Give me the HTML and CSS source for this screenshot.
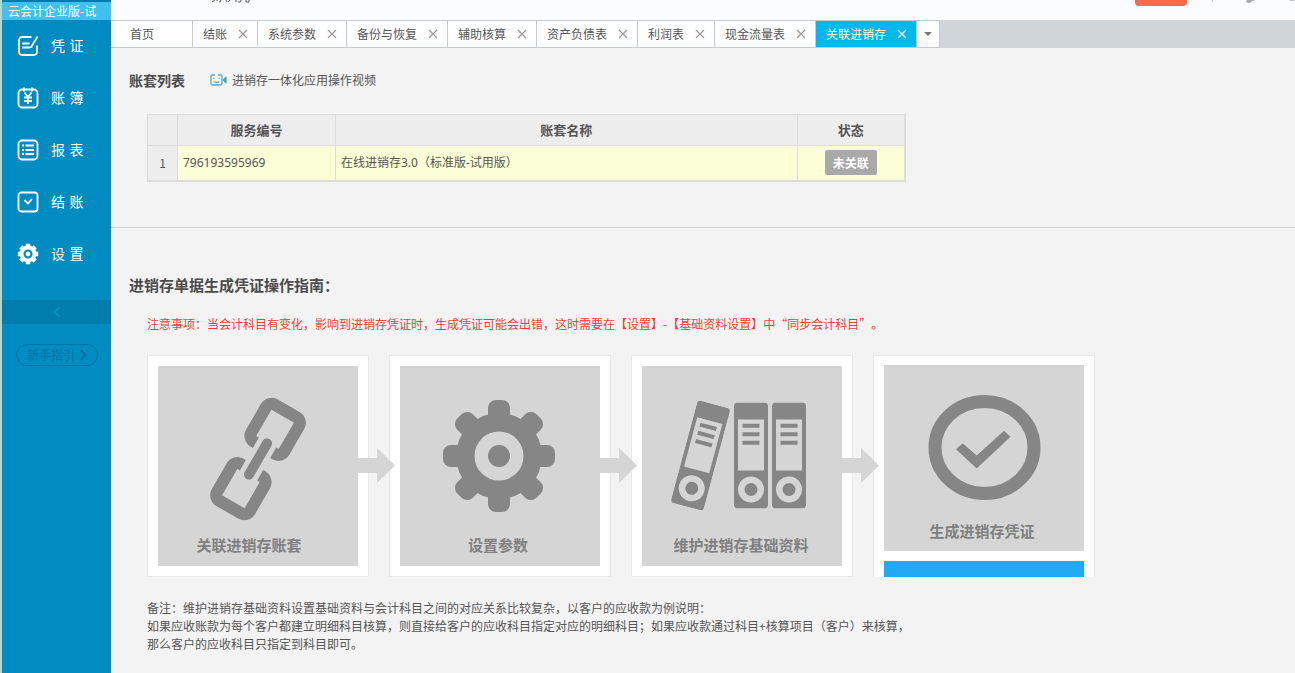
FILE: index.html
```html
<!DOCTYPE html>
<html lang="zh-CN">
<head>
<meta charset="utf-8">
<title>云会计企业版</title>
<link rel="stylesheet" href="styles.css">
</head>
<body>
<svg class="defs" aria-hidden="true">
  <symbol id="close" viewBox="0 0 10 10"><path d="M1 1l8 8M9 1l-8 8" fill="none" stroke="currentColor" stroke-width="1.2"/></symbol>
  <symbol id="arrow" viewBox="0 0 37 36"><path d="M0 10H19V0L37 17.500L19 35V25H0Z" fill="#d5d5d5"/></symbol>
  <symbol id="binder" viewBox="0 0 34 106">
    <rect width="34" height="106" rx="4" fill="#868686"/>
    <path d="M4 17h26v51H4z" fill="#d5d5d5"/>
    <path d="M8.500 23.300h17M8.500 31.700h17M8.500 40.300h17" stroke="#868686" stroke-width="4"/>
    <circle cx="17" cy="87" r="13" fill="#d5d5d5"/><circle cx="17" cy="87" r="6.500" fill="#868686"/>
  </symbol>
</svg>
<div class="app">
  <aside class="sidebar">
    <div class="product">云会计企业版-试</div>
    <nav class="nav">
      <a href="#"><svg viewBox="0 0 22 22"><path d="M14.500 2H5.500Q2 2 2 5.500v11Q2 20 5.500 20h11q3.500 0 3.500-3.500V10.500M20.500 1.500L14 12.500M5 8.500h7.500M5 12.500h7.500l1.500-.5"/></svg>凭 证</a>
      <a href="#"><svg viewBox="0 0 22 22"><rect x="1.500" y="2.500" width="19" height="18" rx="3.500"/><path d="M7 .5V4.500M15 .5V4.500M7.500 5.500l3.500 4.500 3.500-4.500M11 10v7M7 10.500h8M7 14h8"/></svg>账 簿</a>
      <a href="#"><svg viewBox="0 0 22 22"><rect x="1.500" y="1.500" width="19" height="19" rx="3.500"/><path d="M5 6.500h2M8.500 6.500H17M5 11h2M8.500 11H17M5 15h2M8.500 15H17"/></svg>报 表</a>
      <a href="#"><svg viewBox="0 0 22 22"><rect x="1.500" y="1.500" width="19" height="19" rx="3"/><path d="M7.500 9l3.500 3.500L15 8"/></svg>结 账</a>
      <a href="#"><svg viewBox="0 0 22 22"><circle cx="11" cy="11" r="6.500" stroke-width="4"/><path stroke-width="4.500" d="M11 4V.8M11 18v3.200M4 11H.8M18 11h3.200M6 6L3.800 3.800M16 16l2.200 2.200M16 6l2.200-2.200M6 16l-2.200 2.200"/><circle cx="11" cy="11" r="1.500" fill="#fff"/></svg>设 置</a>
    </nav>
    <button class="collapse" type="button" aria-label="收起菜单"><svg viewBox="0 0 8 12"><path d="M6.500 1L1.500 6l5 5"/></svg></button>
    <button class="guide-btn" type="button">新手指引<svg viewBox="0 0 8 12"><path d="M1.500 1l5 5-5 5"/></svg></button>
  </aside>

  <div class="page">
    <header class="topbar">
      <svg class="top-name" viewBox="0 0 40 4"><path d="M1 2l3-2M6 0v1M10 0q0 2-2 2M15 0l1 2M19 0l-2 2M25 0v2M30 0q0 3-3 2M35 0v2h3M38 0v2" fill="none" stroke="#555" stroke-width="1"/></svg>
      <button class="top-action" type="button" aria-label="购买"></button>
      <svg class="top-tools" viewBox="0 0 84 4"><path d="M1.500 0v2" stroke="#ccc"/><path d="M35 1q0 2 2.500 2 2 0 3-1.500L44 0h-8z" fill="#aaa"/><path d="M78 0l6 1" stroke="#bbb"/></svg>
    </header>

    <nav class="tabs">
      <a class="tab home" href="#">首页</a>
      <a class="tab" href="#">结账<svg><use href="#close"/></svg></a>
      <a class="tab" href="#">系统参数<svg><use href="#close"/></svg></a>
      <a class="tab" href="#">备份与恢复<svg><use href="#close"/></svg></a>
      <a class="tab" href="#">辅助核算<svg><use href="#close"/></svg></a>
      <a class="tab" href="#">资产负债表<svg><use href="#close"/></svg></a>
      <a class="tab" href="#">利润表<svg><use href="#close"/></svg></a>
      <a class="tab" href="#">现金流量表<svg><use href="#close"/></svg></a>
      <a class="tab active" href="#">关联进销存<svg><use href="#close"/></svg></a>
      <button class="tab-more" type="button" aria-label="更多标签"><svg viewBox="0 0 8 4"><path d="M0 0h8L4 4z" fill="#777"/></svg></button>
    </nav>

    <main>
      <section class="accounts">
        <div class="section-head">
          <h2>账套列表</h2>
          <a class="video" href="#"><svg viewBox="0 0 17 12"><path d="M5 1H2.500Q1 1 1 2.500v7Q1 11 2.500 11h8Q12 11 12 9.500v-7Q12 1 10.500 1H8M4 4v1M9 4v1M4 7.500q2.500 2 5 0" fill="none" stroke="#53a9cf" stroke-width="1.300"/><path d="M12.500 6L16.500 2v8z" fill="#3a9fcb"/></svg>进销存一体化应用操作视频</a>
        </div>
        <table class="grid">
          <thead><tr><th class="c-num"></th><th class="c-code">服务编号</th><th class="c-name">账套名称</th><th class="c-state">状态</th></tr></thead>
          <tbody><tr><th class="row-num">1</th><td>796193595969</td><td>在线进销存3.0（标准版-试用版）</td><td class="state"><button type="button">未关联</button></td></tr></tbody>
        </table>
      </section>

      <section class="guide">
        <h2>进销存单据生成凭证操作指南：</h2>
        <p class="warning">注意事项：当会计科目有变化，影响到进销存凭证时，生成凭证可能会出错，这时需要在【设置】-【基础资料设置】中“同步会计科目”。</p>
        <div class="steps">
          <a class="step" href="#">
            <svg class="pic" viewBox="0 0 200 200">
              <g transform="translate(100 93) rotate(30)" fill="none" stroke="#868686" stroke-width="12">
                <path id="ring" d="M-10-13h-2.500a6.500 6.500 0 0 1-6.500-6.500V-49a6.500 6.500 0 0 1 6.500-6.500H12.500a6.500 6.500 0 0 1 6.500 6.500v29.500A6.500 6.500 0 0 1 12.500-13h-2.500"/>
                <use href="#ring" transform="rotate(180)"/>
                <path d="M0-18V18" stroke-width="10" stroke-linecap="round"/>
              </g>
              <text x="91" y="185">关联进销存账套</text>
            </svg>
            <svg class="arrow"><use href="#arrow"/></svg>
          </a>
          <a class="step" href="#">
            <svg class="pic" viewBox="0 0 200 200">
              <g transform="translate(99 90)" fill="#868686">
                <g id="teeth"><rect x="-11" y="-56" width="22" height="112" rx="8"/><rect x="-56" y="-11" width="112" height="22" rx="8"/></g>
                <use href="#teeth" transform="rotate(45)"/>
                <circle r="43"/><circle r="24.500" fill="#d5d5d5"/><circle r="11"/>
              </g>
              <text x="98" y="185">设置参数</text>
            </svg>
            <svg class="arrow"><use href="#arrow"/></svg>
          </a>
          <a class="step" href="#">
            <svg class="pic" viewBox="0 0 200 200">
              <use href="#binder" x="41.500" y="36.500" width="34" height="106" transform="rotate(15 58.500 89.500)"/>
              <use href="#binder" x="92" y="36.500" width="34" height="106"/>
              <use href="#binder" x="130" y="36.500" width="34" height="106"/>
              <text x="99" y="185">维护进销存基础资料</text>
            </svg>
            <svg class="arrow"><use href="#arrow"/></svg>
          </a>
          <a class="step last" href="#">
            <svg class="pic" viewBox="0 0 200 186">
              <ellipse cx="100.500" cy="82.500" rx="49.500" ry="46" fill="none" stroke="#868686" stroke-width="13"/>
              <path d="M73 84.300L78.700 79.300L92.700 91.500L120 66.700L125.500 71.700L92.700 102.500Z" fill="#868686" stroke="#868686" stroke-width="1.500" stroke-linejoin="round"/>
              <text x="98" y="172">生成进销存凭证</text>
            </svg>
            <span class="bar"></span>
          </a>
        </div>
        <p class="remark">备注：维护进销存基础资料设置基础资料与会计科目之间的对应关系比较复杂，以客户的应收款为例说明：<br>如果应收账款为每个客户都建立明细科目核算，则直接给客户的应收科目指定对应的明细科目；如果应收款通过科目+核算项目（客户）来核算，<br>那么客户的应收科目只指定到科目即可。</p>
      </section>
    </main>
  </div>
</div>
</body>
</html>
```
FILE: styles.css
```css
* { box-sizing: border-box; }
body {
  margin: 0;
  background: #f3f3f3;
  color: #555;
  font: 12px/18px "Noto Sans CJK SC", sans-serif;
  text-spacing-trim: space-all;
  overflow: hidden;
}
a { color: inherit; text-decoration: none; }
button { font: inherit; border: 0; padding: 0; cursor: pointer; }
h2, p { margin: 0; }
svg { display: block; flex: none; }
.defs { position: absolute; width: 0; height: 0; }

.app { display: flex; min-height: 100vh; }

.sidebar {
  flex: none;
  width: 111px;
  border-left: 2px solid #b9d3cd;
  background: #008cc1;
  color: #fff;
  display: flex;
  flex-direction: column;
}
.product {
  height: 20px;
  padding-left: 6px;
  border-top: 2px solid #0079ad;
  border-radius: 3px 0 0 0;
  background: #3fc0ee;
  line-height: 18px;
  white-space: nowrap;
}
.nav { padding-bottom: 20px; }
.nav a {
  display: flex;
  align-items: center;
  gap: 12px;
  height: 52px;
  padding-left: 15px;
  font: 14px/20px "DejaVu Sans", "Noto Sans CJK SC", sans-serif;
}
.nav svg { width: 22px; height: 22px; fill: none; stroke: #fff; stroke-width: 1.8; }
.collapse {
  display: grid;
  place-items: center;
  height: 24px;
  background: #007dad;
}
.collapse svg { width: 8px; height: 12px; fill: none; stroke: #0793c4; stroke-width: 1.5; }
.guide-btn {
  display: flex;
  align-items: center;
  justify-content: center;
  gap: 4px;
  height: 22px;
  margin: 20px 13px 0 14px;
  border: 1px solid #0074a4;
  border-radius: 11px;
  background: none;
  color: #0074a4;
}
.guide-btn svg { width: 8px; height: 12px; fill: none; stroke: #006a98; stroke-width: 1.8; }

.page { flex: 1; min-width: 0; }
.topbar { display: flex; align-items: flex-start; height: 20px; background: #fbfcff; }
.top-name { width: 40px; height: 4px; margin-left: 100px; }
.top-action {
  width: 52px;
  height: 6px;
  margin-left: auto;
  border-radius: 0 0 4px 4px;
  background: #fd6b45;
}
.top-tools { width: 84px; height: 4px; margin-left: 24px; }

.tabs { display: flex; height: 28px; background: #cfd5d8; }
.tab, .tab-more {
  display: flex;
  align-items: center;
  border: 1px solid #c5cbce;
  border-width: 1px 1px 1px 0;
  background: #fff;
}
.tab { gap: 11px; padding: 0 9px 0 10px; white-space: nowrap; }
.tab svg { width: 10px; height: 10px; color: #999; }
.tab.home { width: 82px; padding-left: 19px; }
.tab.active { background: #00b7ee; color: #fff; }
.tab.active svg { color: #fff; }
.tab-more { justify-content: center; width: 23px; }
.tab-more svg { width: 8px; height: 4px; }

.accounts { padding: 22px 18px 45px; border-bottom: 1px solid #d3d3d3; }
.section-head { display: flex; align-items: center; gap: 25px; height: 20px; }
h2 { font-size: 14px; line-height: 20px; color: #4c4c4c; }
.video { display: flex; align-items: center; gap: 5px; }
.video svg { width: 17px; height: 12px; }

.grid {
  width: 759px;
  margin: 24px 0 0 18px;
  border-collapse: collapse;
  table-layout: fixed;
  border-bottom: 2px solid #dcdcdc;
  border-right: 2px solid #dcdcdc;
}
.grid th, .grid td { border: 1px solid #dcdcdc; padding: 0 5px; text-align: left; }
.grid td { font-family: "Noto Sans", "Noto Sans CJK SC", sans-serif; line-height: 20px; }
.grid thead th { height: 31px; background: #ededed; text-align: center; font-size: 13px; }
.grid tbody tr { height: 35px; background: #fbffd5; }
.grid .row-num { background: #ededed; font-weight: 400; text-align: center; }
.c-num { width: 30px; }
.c-code { width: 158px; }
.c-state { width: 108px; }
.grid .state { text-align: center; }
.state button {
  width: 52px;
  height: 25px;
  border-radius: 2px;
  background: #a9a9a9;
  color: #fff;
  font-family: "Noto Sans CJK SC", sans-serif;
  font-weight: 700;
}

.guide { padding: 47px 18px 20px; }
.guide h2 { font-size: 15px; }
.warning { margin: 20px 0 0 18px; color: #ef4036; }
.steps { display: flex; gap: 20px; margin: 22px 0 0 18px; }
.step {
  position: relative;
  width: 222px;
  height: 222px;
  padding: 10px;
  border: 1px solid #e9e9e9;
  background: #fff;
}
.pic { width: 100%; background: #d5d5d5; }
.pic text { fill: #808080; font-size: 15px; font-weight: 700; text-anchor: middle; }
.arrow { position: absolute; z-index: 1; left: 210px; top: 92px; width: 37px; height: 36px; }
.step.last { padding: 9px 10px 0; border-bottom: 0; }
.bar { display: block; height: 16px; margin-top: 10px; background: #23a9f2; }
.remark { margin: 22px 0 0 18px; }
```
